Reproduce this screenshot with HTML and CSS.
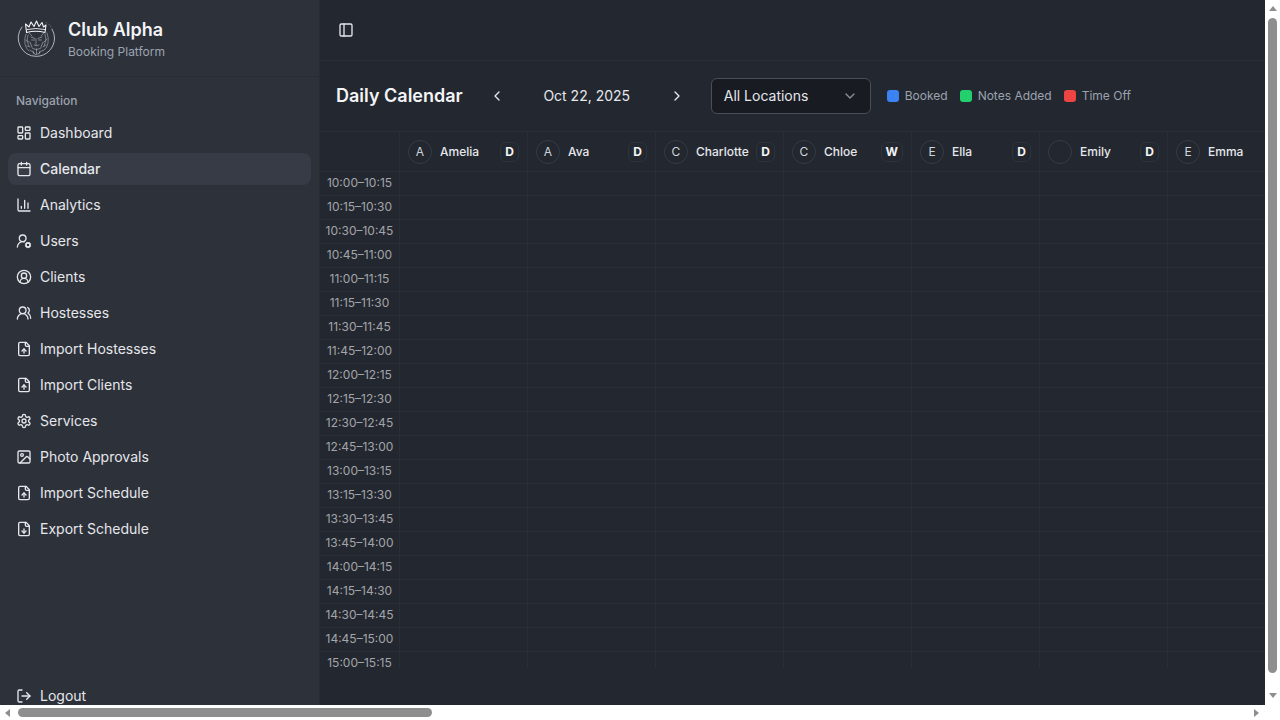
FILE: index.html
```html
<!DOCTYPE html>
<html lang="en">
<head>
<meta charset="utf-8">
<title>Club Alpha</title>
<link rel="stylesheet" href="styles.css">
</head>
<body>
<svg class="sprite" aria-hidden="true">
  <symbol id="i-dash" viewBox="0 0 24 24"><rect x="3" y="3" width="7" height="9" rx="1"/><rect x="14" y="3" width="7" height="5" rx="1"/><rect x="14" y="12" width="7" height="9" rx="1"/><rect x="3" y="16" width="7" height="5" rx="1"/></symbol>
  <symbol id="i-cal" viewBox="0 0 24 24"><path d="M8 2v4M16 2v4"/><rect x="3" y="4" width="18" height="18" rx="2"/><path d="M3 10h18"/></symbol>
  <symbol id="i-chart" viewBox="0 0 24 24"><path d="M3 3v16a2 2 0 0 0 2 2h16"/><path d="M18 17V9M13 17V5M8 17v-3"/></symbol>
  <symbol id="i-usercog" viewBox="0 0 24 24"><path d="M2 21a8 8 0 0 1 10.434-7.62"/><circle cx="10" cy="8" r="5"/><circle cx="18" cy="18" r="3"/><path d="m14.305 19.53.923-.382M15.228 16.852l-.923-.383M16.852 15.228l-.383-.923M16.852 20.772l-.383.924M19.148 15.228l.383-.923M19.53 21.696l-.382-.924M20.772 16.852l.924-.383M20.772 19.148l.924.383"/></symbol>
  <symbol id="i-client" viewBox="0 0 24 24"><path d="M18 20a6 6 0 0 0-12 0"/><circle cx="12" cy="10" r="4"/><circle cx="12" cy="12" r="10"/></symbol>
  <symbol id="i-users" viewBox="0 0 24 24"><path d="M18 21a8 8 0 0 0-16 0"/><circle cx="10" cy="8" r="5"/><path d="M22 20c0-3.37-2-6.5-4-8a5 5 0 0 0-.45-8.3"/></symbol>
  <symbol id="i-fileup" viewBox="0 0 24 24"><path d="M15 2H6a2 2 0 0 0-2 2v16a2 2 0 0 0 2 2h12a2 2 0 0 0 2-2V7Z"/><path d="M14 2v4a2 2 0 0 0 2 2h4"/><path d="M12 12v6"/><path d="m15 15-3-3-3 3"/></symbol>
  <symbol id="i-filedown" viewBox="0 0 24 24"><path d="M15 2H6a2 2 0 0 0-2 2v16a2 2 0 0 0 2 2h12a2 2 0 0 0 2-2V7Z"/><path d="M14 2v4a2 2 0 0 0 2 2h4"/><path d="M12 18v-6"/><path d="m9 15 3 3 3-3"/></symbol>
  <symbol id="i-gear" viewBox="0 0 24 24"><path d="M12.22 2h-.44a2 2 0 0 0-2 2v.18a2 2 0 0 1-1 1.73l-.43.25a2 2 0 0 1-2 0l-.15-.08a2 2 0 0 0-2.73.73l-.22.38a2 2 0 0 0 .73 2.73l.15.1a2 2 0 0 1 1 1.72v.51a2 2 0 0 1-1 1.74l-.15.09a2 2 0 0 0-.73 2.73l.22.38a2 2 0 0 0 2.73.73l.15-.08a2 2 0 0 1 2 0l.43.25a2 2 0 0 1 1 1.73V20a2 2 0 0 0 2 2h.44a2 2 0 0 0 2-2v-.18a2 2 0 0 1 1-1.73l.43-.25a2 2 0 0 1 2 0l.15.08a2 2 0 0 0 2.73-.73l.22-.39a2 2 0 0 0-.73-2.73l-.15-.08a2 2 0 0 1-1-1.74v-.5a2 2 0 0 1 1-1.74l.15-.09a2 2 0 0 0 .73-2.73l-.22-.38a2 2 0 0 0-2.73-.73l-.15.08a2 2 0 0 1-2 0l-.43-.25a2 2 0 0 1-1-1.73V4a2 2 0 0 0-2-2z"/><circle cx="12" cy="12" r="3"/></symbol>
  <symbol id="i-image" viewBox="0 0 24 24"><rect x="3" y="3" width="18" height="18" rx="2"/><circle cx="9" cy="9" r="2"/><path d="m21 15-3.086-3.086a2 2 0 0 0-2.828 0L6 21"/></symbol>
  <symbol id="i-logout" viewBox="0 0 24 24"><path d="M9 21H5a2 2 0 0 1-2-2V5a2 2 0 0 1 2-2h4"/><path d="m16 17 5-5-5-5"/><path d="M21 12H9"/></symbol>
  <symbol id="i-panel" viewBox="0 0 24 24"><rect x="3" y="3" width="18" height="18" rx="2"/><path d="M9 3v18"/></symbol>
  <symbol id="i-left" viewBox="0 0 24 24"><path d="m15 18-6-6 6-6"/></symbol>
  <symbol id="i-right" viewBox="0 0 24 24"><path d="m9 18 6-6-6-6"/></symbol>
  <symbol id="i-down" viewBox="0 0 24 24"><path d="m6 9 6 6 6-6"/></symbol>
</svg>
<div class="window">
<div class="viewport">
<div class="app">
  <aside class="sidebar">
    <header class="brand">
      <svg class="logo" viewBox="0 0 40 40" aria-hidden="true">
        <path class="logo-ring" d="M6 9A18.400 18.400 0 0 0 20.500 38.400A18.400 18.400 0 0 0 38.500 20Q38.400 15 36 11"/>
        <path class="logo-dots" d="M30 4.500l.5.300M32.500 6l.5.500M34.500 8l.4.500"/>
        <path class="logo-crown" d="M10.500 14 9.500 6l3.500 3 2-5 3 4.500L20.500 3l2.500 5.500 3-4 1.500 4.500 2.500-2-1 7.500q-9-2.500-18.500 0z"/>
        <path class="logo-band" d="M11 11.500q9-2 18 0"/>
        <path class="logo-hair" d="M10 16q-2 5-1 10t4 7M31 15q2 5 1 10-1 6-5 8M12 17l-1 6 2 5M29 16l1 6-2 6M14 32l4 3 2 2 3-2 4-3M13 15l3 3M28 15l-3 3M10 22l3 2M31 21l-3 3M11 28l3 1M30 27l-3 2"/>
        <path class="logo-face" d="M15 19l4 1.500M26 19l-4 1.500M15.500 22h3M22.500 22h3M20 21v6M18 27q2.500 2 5 0M16 30q4 3 9 0M17 33l1 3M24 33l-1 3M20.500 31v5M14 24l2 5M27 24l-2 5"/>
      </svg>
      <div class="brand-text">
        <div class="brand-name">Club Alpha</div>
        <div class="brand-sub">Booking Platform</div>
      </div>
    </header>
    <nav class="nav">
      <div class="nav-label">Navigation</div>
      <ul class="nav-list">
        <li><a class="nav-item"><svg class="icon"><use href="#i-dash"/></svg>Dashboard</a></li>
        <li><a class="nav-item active"><svg class="icon"><use href="#i-cal"/></svg>Calendar</a></li>
        <li><a class="nav-item"><svg class="icon"><use href="#i-chart"/></svg>Analytics</a></li>
        <li><a class="nav-item"><svg class="icon"><use href="#i-usercog"/></svg>Users</a></li>
        <li><a class="nav-item"><svg class="icon"><use href="#i-client"/></svg>Clients</a></li>
        <li><a class="nav-item"><svg class="icon"><use href="#i-users"/></svg>Hostesses</a></li>
        <li><a class="nav-item"><svg class="icon"><use href="#i-fileup"/></svg>Import Hostesses</a></li>
        <li><a class="nav-item"><svg class="icon"><use href="#i-fileup"/></svg>Import Clients</a></li>
        <li><a class="nav-item"><svg class="icon"><use href="#i-gear"/></svg>Services</a></li>
        <li><a class="nav-item"><svg class="icon"><use href="#i-image"/></svg>Photo Approvals</a></li>
        <li><a class="nav-item"><svg class="icon"><use href="#i-fileup"/></svg>Import Schedule</a></li>
        <li><a class="nav-item"><svg class="icon"><use href="#i-filedown"/></svg>Export Schedule</a></li>
      </ul>
    </nav>
    <footer class="side-foot">
      <a class="nav-item"><svg class="icon"><use href="#i-logout"/></svg>Logout</a>
    </footer>
  </aside>
  <main class="main">
    <div class="topbar">
      <button class="icon-btn"><svg class="icon"><use href="#i-panel"/></svg></button>
    </div>
    <div class="toolbar">
      <h1 class="title">Daily Calendar</h1>
      <button class="icon-btn nav-btn"><svg class="icon"><use href="#i-left"/></svg></button>
      <div class="date">Oct 22, 2025</div>
      <button class="icon-btn nav-btn"><svg class="icon"><use href="#i-right"/></svg></button>
      <div class="select"><span>All Locations</span><svg class="icon select-chev"><use href="#i-down"/></svg></div>
      <div class="legend">
        <div class="legend-item"><span class="swatch blue"></span>Booked</div>
        <div class="legend-item"><span class="swatch green"></span>Notes Added</div>
        <div class="legend-item"><span class="swatch red"></span>Time Off</div>
      </div>
    </div>
    <div class="grid">
      <div class="row head">
        <div class="time"></div>
        <div class="cell staff"><span class="avatar">A</span><span class="name">Amelia</span><span class="badge">D</span></div>
        <div class="cell staff"><span class="avatar">A</span><span class="name">Ava</span><span class="badge">D</span></div>
        <div class="cell staff"><span class="avatar">C</span><span class="name">Charlotte</span><span class="badge">D</span></div>
        <div class="cell staff"><span class="avatar">C</span><span class="name">Chloe</span><span class="badge">W</span></div>
        <div class="cell staff"><span class="avatar">E</span><span class="name">Ella</span><span class="badge">D</span></div>
        <div class="cell staff"><span class="avatar"></span><span class="name">Emily</span><span class="badge">D</span></div>
        <div class="cell staff"><span class="avatar">E</span><span class="name">Emma</span></div>
      </div>
      <div class="row"><div class="time">10:00–10:15</div><div class="cell"></div><div class="cell"></div><div class="cell"></div><div class="cell"></div><div class="cell"></div><div class="cell"></div><div class="cell"></div></div>
      <div class="row"><div class="time">10:15–10:30</div><div class="cell"></div><div class="cell"></div><div class="cell"></div><div class="cell"></div><div class="cell"></div><div class="cell"></div><div class="cell"></div></div>
      <div class="row"><div class="time">10:30–10:45</div><div class="cell"></div><div class="cell"></div><div class="cell"></div><div class="cell"></div><div class="cell"></div><div class="cell"></div><div class="cell"></div></div>
      <div class="row"><div class="time">10:45–11:00</div><div class="cell"></div><div class="cell"></div><div class="cell"></div><div class="cell"></div><div class="cell"></div><div class="cell"></div><div class="cell"></div></div>
      <div class="row"><div class="time">11:00–11:15</div><div class="cell"></div><div class="cell"></div><div class="cell"></div><div class="cell"></div><div class="cell"></div><div class="cell"></div><div class="cell"></div></div>
      <div class="row"><div class="time">11:15–11:30</div><div class="cell"></div><div class="cell"></div><div class="cell"></div><div class="cell"></div><div class="cell"></div><div class="cell"></div><div class="cell"></div></div>
      <div class="row"><div class="time">11:30–11:45</div><div class="cell"></div><div class="cell"></div><div class="cell"></div><div class="cell"></div><div class="cell"></div><div class="cell"></div><div class="cell"></div></div>
      <div class="row"><div class="time">11:45–12:00</div><div class="cell"></div><div class="cell"></div><div class="cell"></div><div class="cell"></div><div class="cell"></div><div class="cell"></div><div class="cell"></div></div>
      <div class="row"><div class="time">12:00–12:15</div><div class="cell"></div><div class="cell"></div><div class="cell"></div><div class="cell"></div><div class="cell"></div><div class="cell"></div><div class="cell"></div></div>
      <div class="row"><div class="time">12:15–12:30</div><div class="cell"></div><div class="cell"></div><div class="cell"></div><div class="cell"></div><div class="cell"></div><div class="cell"></div><div class="cell"></div></div>
      <div class="row"><div class="time">12:30–12:45</div><div class="cell"></div><div class="cell"></div><div class="cell"></div><div class="cell"></div><div class="cell"></div><div class="cell"></div><div class="cell"></div></div>
      <div class="row"><div class="time">12:45–13:00</div><div class="cell"></div><div class="cell"></div><div class="cell"></div><div class="cell"></div><div class="cell"></div><div class="cell"></div><div class="cell"></div></div>
      <div class="row"><div class="time">13:00–13:15</div><div class="cell"></div><div class="cell"></div><div class="cell"></div><div class="cell"></div><div class="cell"></div><div class="cell"></div><div class="cell"></div></div>
      <div class="row"><div class="time">13:15–13:30</div><div class="cell"></div><div class="cell"></div><div class="cell"></div><div class="cell"></div><div class="cell"></div><div class="cell"></div><div class="cell"></div></div>
      <div class="row"><div class="time">13:30–13:45</div><div class="cell"></div><div class="cell"></div><div class="cell"></div><div class="cell"></div><div class="cell"></div><div class="cell"></div><div class="cell"></div></div>
      <div class="row"><div class="time">13:45–14:00</div><div class="cell"></div><div class="cell"></div><div class="cell"></div><div class="cell"></div><div class="cell"></div><div class="cell"></div><div class="cell"></div></div>
      <div class="row"><div class="time">14:00–14:15</div><div class="cell"></div><div class="cell"></div><div class="cell"></div><div class="cell"></div><div class="cell"></div><div class="cell"></div><div class="cell"></div></div>
      <div class="row"><div class="time">14:15–14:30</div><div class="cell"></div><div class="cell"></div><div class="cell"></div><div class="cell"></div><div class="cell"></div><div class="cell"></div><div class="cell"></div></div>
      <div class="row"><div class="time">14:30–14:45</div><div class="cell"></div><div class="cell"></div><div class="cell"></div><div class="cell"></div><div class="cell"></div><div class="cell"></div><div class="cell"></div></div>
      <div class="row"><div class="time">14:45–15:00</div><div class="cell"></div><div class="cell"></div><div class="cell"></div><div class="cell"></div><div class="cell"></div><div class="cell"></div><div class="cell"></div></div>
      <div class="row"><div class="time">15:00–15:15</div><div class="cell"></div><div class="cell"></div><div class="cell"></div><div class="cell"></div><div class="cell"></div><div class="cell"></div><div class="cell"></div></div>
    </div>
  </main>
</div>
</div>
<div class="scroll-v" aria-hidden="true">
  <span class="arrow up"></span>
  <span class="thumb-v"></span>
  <span class="arrow down"></span>
</div>
<div class="scroll-h" aria-hidden="true">
  <span class="arrow left"></span>
  <span class="thumb-h"></span>
  <span class="arrow right"></span>
</div>
</div>
</body>
</html>
```
FILE: styles.css
```css
* { box-sizing: border-box; }
html, body { margin: 0; padding: 0; height: 100%; overflow: hidden; background: #fff; }
body { font-family: Inter, "Liberation Sans", sans-serif; color: #e5e7eb; font-size: 14px; line-height: 20px; }
.sprite { display: none; }

.window { display: grid; grid-template-columns: 1fr 15px; grid-template-rows: 1fr 15px; height: 100vh; }
.viewport { overflow: hidden; min-width: 0; min-height: 0; }
.app { display: flex; height: 720px; }

.scroll-v { display: flex; flex-direction: column; align-items: center; background: #fff; padding: 6px 0 7px; }
.scroll-h { display: flex; align-items: center; background: #fff; padding: 0 6px 0 5px; }
.thumb-v { width: 9px; height: 655px; margin-top: 7px; border-radius: 5px; background: #8e8e8e; }
.thumb-h { width: 414px; height: 9px; margin-left: 8px; margin-right: auto; border-radius: 5px; background: #8e8e8e; }
.arrow { width: 0; height: 0; border-style: solid; border-color: transparent; }
.up { border-width: 0 4.500px 5px; border-bottom-color: #8e8e8e; }
.down { margin-top: auto; border-width: 5px 4.500px 0; border-top-color: #8e8e8e; }
.left { border-width: 4.500px 5px 4.500px 0; border-right-color: #8e8e8e; }
.right { border-width: 4.500px 0 4.500px 5px; border-left-color: #8e8e8e; }

.icon { width: 16px; height: 16px; flex: none; fill: none; stroke: currentColor; stroke-width: 2; stroke-linecap: round; stroke-linejoin: round; }

.sidebar { flex: none; width: 320px; display: flex; flex-direction: column; background: #2d313a; border-right: 1px solid #282c34; }
.brand { height: 77px; flex: none; display: flex; align-items: flex-start; gap: 12px; padding: 16px; border-bottom: 1px solid #282c34; }
.logo { width: 40px; height: 40px; flex: none; margin-top: 2px; fill: none; stroke-linecap: round; stroke-linejoin: round; }
.logo-ring { stroke: #d4d6da; stroke-width: .8; }
.logo-dots { stroke: #9ca3af; stroke-width: .6; }
.logo-crown { stroke: #f4f5f6; stroke-width: 1.100; }
.logo-band { stroke: #f4f5f6; stroke-width: .9; }
.logo-hair { stroke: #aeb1b7; stroke-width: .6; }
.logo-face { stroke: #c9cbd0; stroke-width: .55; }
.brand-name { font-size: 18px; line-height: 28px; font-weight: 600; color: #f3f4f6; }
.brand-sub { font-size: 12px; line-height: 16px; color: #9ca3af; }
.nav { flex: 1; padding: 8px; min-height: 0; }
.nav-label { height: 32px; display: flex; align-items: center; padding: 0 8px; font-size: 12px; line-height: 16px; font-weight: 500; color: #9ca3af; }
.nav-list { list-style: none; margin: 0; padding: 0; display: flex; flex-direction: column; gap: 4px; }
.nav-item { height: 32px; display: flex; align-items: center; gap: 8px; padding: 0 8px; border-radius: 8px; font-size: 14px; color: #e5e7eb; }
.nav-item.active { background: #373b46; font-weight: 500; }
.side-foot { flex: none; padding: 8px; }

.main { flex: 1; min-width: 0; background: #23272f; display: flex; flex-direction: column; }
.topbar { height: 61px; flex: none; display: flex; align-items: center; padding: 0 12px; border-bottom: 1px solid #2a2e36; }
.icon-btn { width: 28px; height: 28px; padding: 0; border: 0; background: none; color: #e5e7eb; display: flex; align-items: center; justify-content: center; }
.toolbar { height: 70px; flex: none; display: flex; align-items: center; padding: 0 16px; }
.title { margin: 0 18px 0 0; font-size: 18px; line-height: 28px; font-weight: 600; color: #f3f4f6; }
.nav-btn { width: 32px; height: 32px; }
.date { width: 148px; text-align: center; font-size: 14px; color: #e5e7eb; }
.select { width: 160px; height: 36px; margin-left: 18px; display: flex; align-items: center; justify-content: space-between; padding: 0 12px; border: 1px solid #4a4e59; border-radius: 6px; background: #181b22; font-size: 14px; color: #e5e7eb; }
.select-chev { color: #8b8f98; }
.legend { display: flex; align-items: center; gap: 12px; margin-left: 16px; }
.legend-item { display: flex; align-items: center; gap: 6px; font-size: 12px; line-height: 16px; color: #9ca3af; }
.swatch { width: 12px; height: 12px; border-radius: 3px; }
.blue { background: #3b82f6; }
.green { background: #22d06e; }
.red { background: #ef4444; }

.grid { height: 537px; flex: none; overflow: hidden; border-top: 1px solid #2a2e36; }
.row { display: flex; height: 24px; border-bottom: 1px solid #2a2e36; }
.row.head { height: 40px; }
.time { flex: none; width: 80px; display: flex; justify-content: center; padding-top: 3px; font-size: 12px; line-height: 16px; color: #a3a5aa; border-right: 1px solid #2a2e36; }
.cell { flex: none; width: 128px; border-right: 1px solid #2a2e36; }
.staff { display: flex; align-items: center; gap: 8px; padding: 0 8px; }
.avatar { flex: none; width: 24px; height: 24px; border-radius: 50%; border: 1px solid #363a43; display: flex; align-items: center; justify-content: center; font-size: 12px; line-height: 16px; color: #d1d5db; }
.name { flex: 1; min-width: 0; font-size: 12px; line-height: 16px; font-weight: 500; color: #e5e7eb; white-space: nowrap; }
.badge { flex: none; height: 20px; padding: 0 4px; display: flex; align-items: center; border: 1px solid #2f333c; border-radius: 6px; font-size: 12px; line-height: 16px; font-weight: 700; color: #f3f4f6; }
```
